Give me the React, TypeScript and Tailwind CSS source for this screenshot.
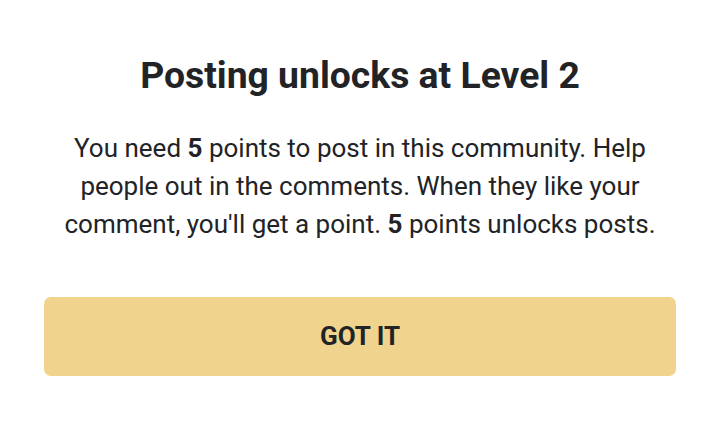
export default function App() {
  return (
    <div className="flex h-[424px] w-[720px] flex-col items-center bg-white font-['Roboto',sans-serif] text-[#222326]">
      <h1 className="mt-[52px] text-[37.3px] font-bold leading-[46px]">
        Posting unlocks at Level 2
      </h1>
      <p className="mt-[31px] w-[610px] text-center text-[26px] leading-[38px]">
        You need <b>5</b> points to post in this community. Help people out in
        the comments. When they like your comment, you'll get a point.{' '}
        <b>5</b> points unlocks posts.
      </p>
      <button className="mt-[54px] h-[79px] w-[632px] rounded-[7px] bg-[#f0d38c] text-[26px] font-bold">
        GOT IT
      </button>
    </div>
  )
}
